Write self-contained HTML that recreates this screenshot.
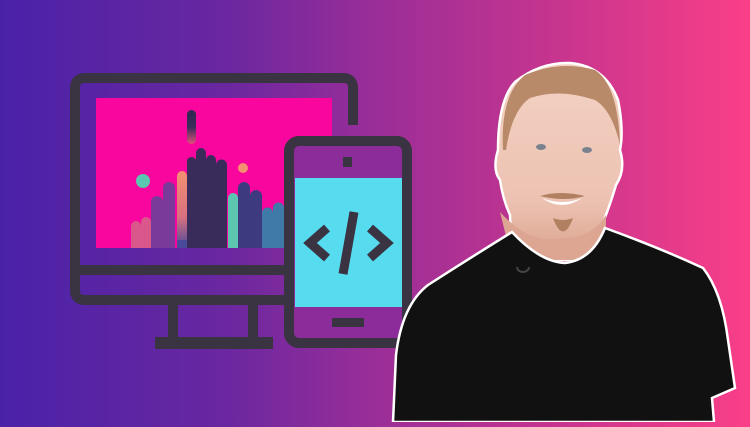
<!DOCTYPE html>
<html><head><meta charset="utf-8"><style>html,body{margin:0;padding:0}body{width:750px;height:422px;overflow:hidden;background:linear-gradient(90deg,#4a22a8 0%,#6a27a0 30%,#9a2e98 50%,#c8358e 75%,#fa3f88 100%)}</style></head><body>
<svg width="750" height="422" viewBox="0 0 750 422" xmlns="http://www.w3.org/2000/svg">
<defs>
<linearGradient id="cap" x1="0" y1="0" x2="0" y2="1"><stop offset="0" stop-color="#2e2850"/><stop offset="0.5" stop-color="#3a2c5a"/><stop offset="1" stop-color="#e0507a"/></linearGradient>
<linearGradient id="og" x1="0" y1="0" x2="0" y2="1"><stop offset="0" stop-color="#f59070"/><stop offset="0.6" stop-color="#d87080"/><stop offset="1" stop-color="#4a4a9a"/></linearGradient>
<linearGradient id="skin" x1="0" y1="0" x2="0" y2="1"><stop offset="0" stop-color="#f3d2c4"/><stop offset="0.7" stop-color="#edc2b2"/><stop offset="1" stop-color="#d9a28c"/></linearGradient>
</defs>
<g fill="none" stroke="#3a3342" stroke-width="10">
<path d="M353 125 V88 Q353 78 343 78 H85 Q75 78 75 88 V290 Q75 300 85 300 H284"/>
<line x1="80" y1="270" x2="284" y2="270"/>
<line x1="173" y1="305" x2="173" y2="340"/>
<line x1="253" y1="305" x2="253" y2="340"/>
</g>
<rect x="155" y="337" width="118" height="12" fill="#3a3342"/>
<rect x="96" y="98" width="236" height="150" fill="#f8069d"/>
<path d="M131 248 V226 a5 5 0 0 1 10 0 V222 a5 5 0 0 1 10 0 V248Z" fill="#d9578a"/>
<path d="M151 248 V202 a6 6 0 0 1 12 0 V188 a6 6 0 0 1 12 0 V248Z" fill="#7a3a9a"/>
<rect x="177" y="171" width="10" height="77" rx="5" fill="url(#og)"/>
<rect x="177" y="240" width="10" height="8" fill="#4a4a9a"/>
<path d="M187 248 V160 a5 5 0 0 1 9 0 V153 a5 5 0 0 1 10 0 V160 a5 5 0 0 1 10 0 V165 a5 5 0 0 1 11 0 V248Z" fill="#3a2c5a"/>
<rect x="187" y="110" width="9" height="34" rx="4.5" fill="url(#cap)"/>
<rect x="228" y="193" width="10" height="55" rx="5" fill="#5cc6b0"/>
<rect x="228" y="240" width="10" height="8" fill="#5cc6b0"/>
<path d="M238 248 V188 a6 6 0 0 1 12 0 V196 a6 6 0 0 1 12 0 V248Z" fill="#3e3a80"/>
<path d="M262 248 V213 a5 5 0 0 1 11 0 V208 a5 5 0 0 1 11 0 V248Z" fill="#3f7aa8"/>
<circle cx="143" cy="181" r="7" fill="#5cc6b0"/>
<circle cx="243" cy="168" r="5" fill="#f59070"/>
<rect x="289" y="141" width="118" height="202" rx="10" fill="#8c2c9a" stroke="#3a3342" stroke-width="10"/>
<rect x="295" y="178" width="107" height="129" fill="#57dbef"/>
<rect x="343" y="157" width="9" height="10" fill="#3a3342"/>
<rect x="332" y="318" width="32" height="9" fill="#3a3342"/>
<g fill="none" stroke="#3a3342" stroke-width="9">
<polyline points="327,228 310,243 327,258"/>
<polyline points="370,228 387,243 370,258"/>
<line x1="354" y1="212" x2="343" y2="274"/>
</g>
<!-- head + neck -->
<path d="M512 260 L510 215 Q503 200 500 180 Q492 170 498 150 Q498 100 515 82 Q540 62 570 63 Q605 66 618 100 Q624 130 620 150 Q626 170 616 185 Q610 205 604 220 L605 260Z" fill="url(#skin)" stroke="#fff" stroke-width="2.5"/>
<path d="M503 150 Q500 95 525 75 Q560 60 595 70 Q618 85 620 145 Q612 110 595 100 Q560 88 530 98 Q512 110 506 150Z" fill="#b98a6a"/>
<path d="M500 212 Q530 245 560 238 Q590 240 606 215 L606 260 L512 260Z" fill="#dca692"/>
<ellipse cx="541" cy="147" rx="5" ry="3" fill="#7a8290"/>
<ellipse cx="587" cy="150" rx="5" ry="3" fill="#7a8290"/>
<path d="M540 196 Q560 190 585 196 Q565 202 540 196Z" fill="#b08060"/>
<path d="M542 198 Q562 212 582 198 Q562 206 542 198Z" fill="#fff"/>
<path d="M553 218 Q563 245 573 218 Q563 222 553 218Z" fill="#b08060"/>
<!-- shirt -->
<path d="M393 422 L396 355 Q402 305 428 285 Q470 258 512 232 Q540 262 565 263 Q592 260 605 228 Q660 248 703 268 Q722 292 728 340 L735 388 L712 398 L714 422Z" fill="#111" stroke="#fff" stroke-width="2.5"/>
<path d="M517 267 a6 5 0 1 0 12 0" fill="none" stroke="#444" stroke-width="2"/>
</svg>
</body></html>
